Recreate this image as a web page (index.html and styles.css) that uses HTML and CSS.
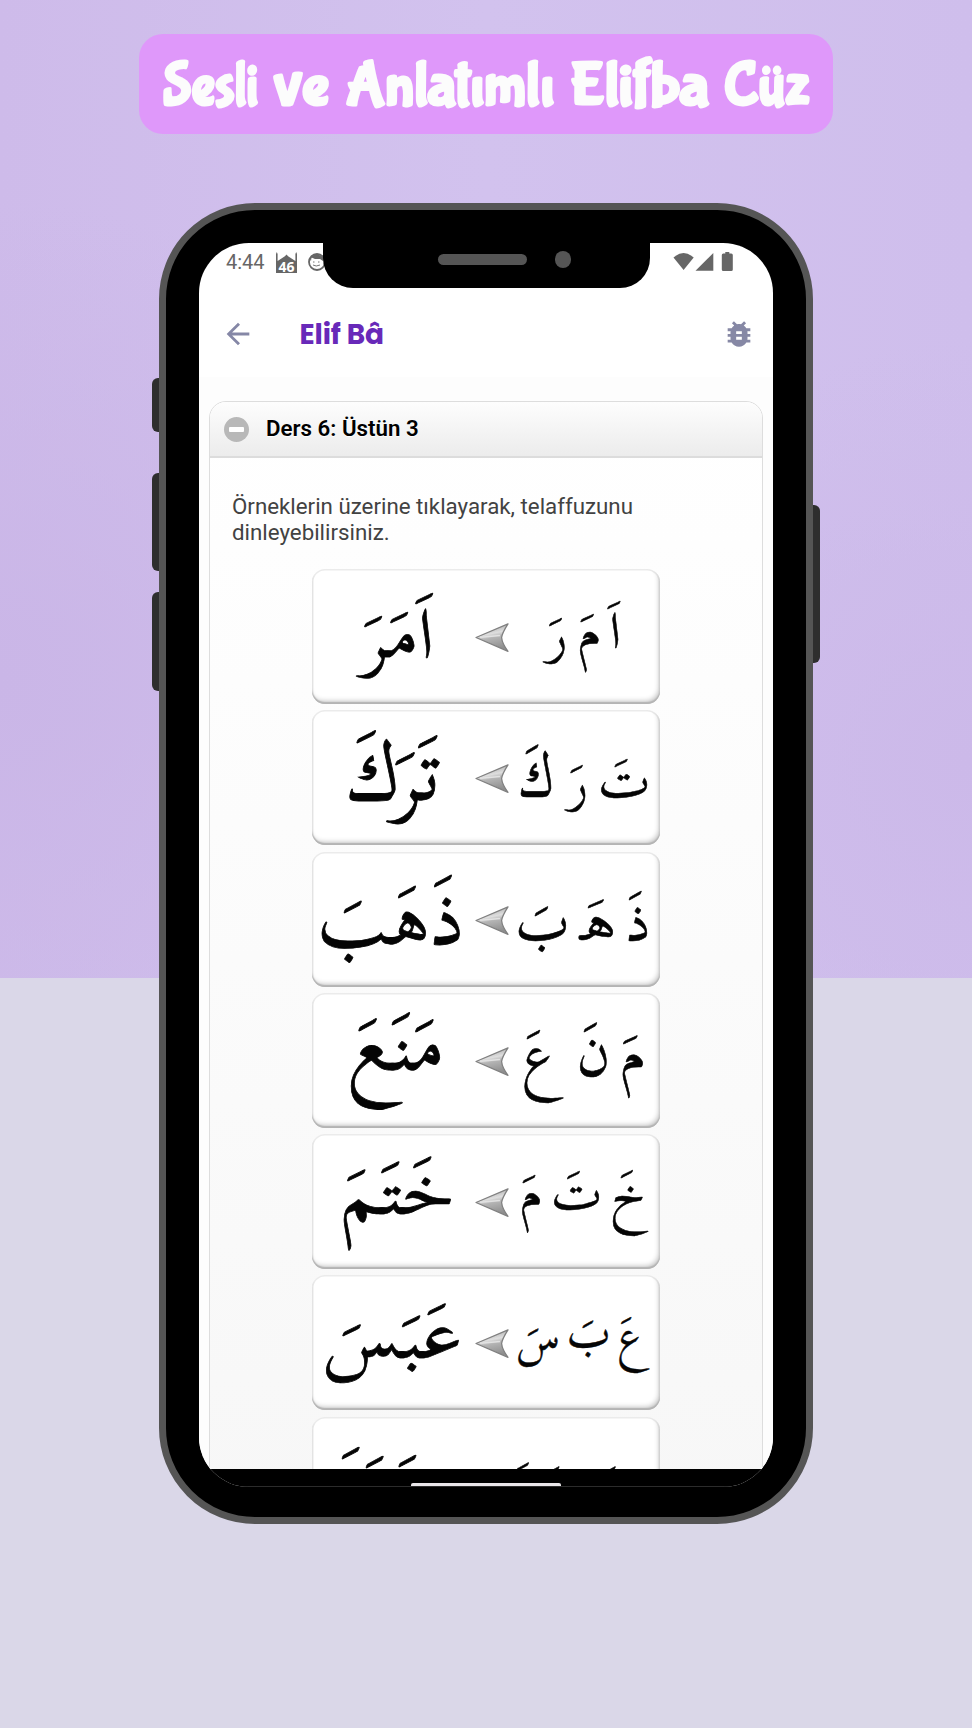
FILE: index.html
```html
<!DOCTYPE html>
<html lang="tr">
<head>
<meta charset="utf-8">
<title>Sesli ve Anlatımlı Elifba Cüz</title>
<link rel="stylesheet" href="styles.css">
</head>
<body>
<svg class="defs" width="0" height="0" aria-hidden="true">
  <defs>
    <linearGradient id="steel" x1="0" y1="0" x2="0.25" y2="1">
      <stop offset="0" stop-color="#8e8e8e"/>
      <stop offset="0.45" stop-color="#dedede"/>
      <stop offset="0.6" stop-color="#b4b4b4"/>
      <stop offset="1" stop-color="#8f8f8f"/>
    </linearGradient>
    <symbol id="arrow" viewBox="0 0 34 29">
      <path d="M1 14.5 33 .8C29 7 27 11 26.600 14.500C27 19 29 23 33 28.300Z" fill="url(#steel)" stroke="#808080" stroke-width="1.300" stroke-linejoin="round"/>
      <path d="M5 14.300 25 12.500" stroke="#e2e2e2" stroke-width="1.500"/>
    </symbol>
  </defs>
</svg>

<header class="banner">
  <svg class="banner-text" width="694" height="100" viewBox="0 0 694 100">
    <text y="69"><tspan x="24" textLength="95" lengthAdjust="spacingAndGlyphs">Sesli</tspan><tspan x="135" textLength="55" lengthAdjust="spacingAndGlyphs">ve</tspan><tspan x="207" textLength="208" lengthAdjust="spacingAndGlyphs">Anlatımlı</tspan><tspan x="431" textLength="139" lengthAdjust="spacingAndGlyphs">Elifba</tspan><tspan x="585" textLength="86" lengthAdjust="spacingAndGlyphs">Cüz</tspan></text>
  </svg>
</header>

<main class="phone">
  <i class="key key-a"></i><i class="key key-b"></i><i class="key key-c"></i><i class="key key-d"></i>
  <div class="screen">
    <div class="notch"><i class="speaker"></i><i class="camera"></i></div>
    <div class="status">
      <span class="time">4:44</span>
      <svg class="mosque" width="21" height="21" viewBox="0 0 21 21"><path fill="#666" d="M0 21V2L.8 0 1.600 2V9L7 5.500Q9 4.500 10.500 2.500 12 4.500 14 5.500L19.400 9V2L20.200 0 21 2V21Z"/><text x="10.500" y="19.500" text-anchor="middle" textLength="16" lengthAdjust="spacingAndGlyphs">46</text></svg>
      <svg class="cat" width="18" height="18" viewBox="0 0 18 18"><circle cx="9" cy="9" r="8" fill="#fff" stroke="#666" stroke-width="1.800"/><path fill="#666" d="M1.500 5Q8-2 16.500 5L15 8 12 6H7L3.500 4.500 3 8Z"/><path d="M5 9h1.500M10 9h1.500M5 12q3 2 7 0" stroke="#777" fill="none"/></svg>
      <svg class="signals" width="62" height="20" viewBox="0 0 62 20"><g fill="#666"><path d="M.5 5.500Q10.500-3.300 20.700 5.500L10.600 18Z"/><path d="M22.500 18.700 40.300 1V18.700Z"/><path d="M52.300 0h4v1.500h2q1.500 0 1.500 1.500v14.500q0 1.500-1.500 1.500h-8q-1.500 0-1.500-1.500V3q0-1.500 1.500-1.500h2Z"/></g></svg>
    </div>
    <div class="appbar">
      <svg class="back" width="34" height="34" viewBox="0 0 24 24"><path fill="#8587a6" d="M20 11H7.830l5.590-5.590L12 4l-8 8 8 8 1.410-1.410L7.830 13H20v-2z"/></svg>
      <h1>Elif Bâ</h1>
      <svg class="bug" width="34" height="34" viewBox="0 0 24 24"><path fill="#8688a5" d="M20 8h-2.810c-.45-.78-1.070-1.450-1.820-1.960L17 4.410 15.590 3l-2.170 2.170C12.960 5.060 12.490 5 12 5s-.96.06-1.410.17L8.410 3 7 4.410l1.620 1.630C7.880 6.550 7.260 7.220 6.810 8H4v2h2.090c-.05.33-.09.66-.09 1v1H4v2h2v1c0 .34.040.67.090 1H4v2h2.810c1.040 1.790 2.970 3 5.190 3s4.150-1.210 5.190-3H20v-2h-2.090c.05-.33.09-.66.09-1v-1h2v-2h-2v-1c0-.34-.04-.67-.09-1H20V8zm-6 8h-4v-2h4v2zm0-4h-4v-2h4v2z"/></svg>
    </div>
    <section class="content">
      <div class="lesson">
        <div class="lesson-head"><i class="minus"></i><h2>Ders 6: Üstün 3</h2></div>
        <p>Örneklerin üzerine tıklayarak, telaffuzunu<br>dinleyebilirsiniz.</p>
        <div class="cards">
          <svg class="card" viewBox="0 0 348 135">
            <text transform="translate(49.5 87.6) scale(1.509 1.400)">اَمَرَ</text>
            <use href="#arrow" x="163" y="54" width="34" height="29"/>
            <text transform="translate(235.1 80.6) scale(1.081 1.031)">رَ</text>
            <text transform="translate(265.6 80.7) scale(1.118 .999)">مَ</text>
            <text transform="translate(297.4 79) scale(1.108 1.010)">اَ</text>
          </svg>
          <svg class="card" viewBox="0 0 348 135">
            <text transform="translate(33.2 90) scale(1.641 1.580)">تَرَكَ</text>
            <use href="#arrow" x="163" y="54" width="34" height="29"/>
            <text transform="translate(206.100 87) scale(1.083 1.187)">كَ</text>
            <text transform="translate(256.4 87.500) scale(1.033 1.022)">رَ</text>
            <text transform="translate(286 87) scale(1.095 1.002)">تَ</text>
          </svg>
          <svg class="card" viewBox="0 0 348 135">
            <text transform="translate(5.8 91.5) scale(1.508 1.520)">ذَهَبَ</text>
            <use href="#arrow" x="163" y="54" width="34" height="29"/>
            <text transform="translate(203.500 86.8) scale(1.126 1.162)">بَ</text>
            <text transform="translate(270 87.500) scale(1.350 1.075)">هَ‍</text>
            <text transform="translate(314 89) scale(1.072 1.103)">ذَ</text>
          </svg>
          <svg class="card" viewBox="0 0 348 135">
            <text transform="translate(36.7 77) scale(1.544 1.550)">مَنَعَ</text>
            <use href="#arrow" x="163" y="54" width="34" height="29"/>
            <text transform="translate(209.5 81) scale(1.131 1.134)">عَ</text>
            <text transform="translate(265 71.500) scale(1.120 1.168)">نَ</text>
            <text transform="translate(308 80.8) scale(1.218 1.077)">مَ</text>
          </svg>
          <svg class="card" viewBox="0 0 348 135">
            <text transform="translate(28.8 80) scale(1.537 1.430)">خَتَمَ</text>
            <use href="#arrow" x="163" y="54" width="34" height="29"/>
            <text transform="translate(207.800 75.700) scale(1.076 .977)">مَ</text>
            <text transform="translate(239 74.8) scale(1.071 .974)">تَ</text>
            <text transform="translate(299.4 75.9) scale(1.029 1.010)">خَ</text>
          </svg>
          <svg class="card" viewBox="0 0 348 135">
            <text transform="translate(12.7 83) scale(1.546 1.446)">عَبَسَ</text>
            <use href="#arrow" x="163" y="54" width="34" height="29"/>
            <text transform="translate(205.600 75.500) scale(.91 .93)">سَ</text>
            <text transform="translate(254.800 71.900) scale(.914 .924)">بَ</text>
            <text transform="translate(305 75.9) scale(.874 .867)">عَ</text>
          </svg>
          <svg class="card" viewBox="0 0 348 135">
            <text transform="translate(25 86) scale(1.5 1.5)">وَرَدَ</text>
            <text transform="translate(201 85) scale(1.050 1.050)">دَ</text>
            <text transform="translate(233 83) scale(1.050 1.050)">رَ</text>
            <text transform="translate(286 83) scale(1.050 1.050)">وَ</text>
          </svg>
        </div>
      </div>
    </section>
    <div class="navbar"><i class="home"></i></div>
  </div>
</main>
</body>
</html>
```
FILE: styles.css
```css
* { box-sizing: border-box; }

body {
  margin: 0;
  height: 1728px;
  overflow: hidden;
  display: flex;
  flex-direction: column;
  align-items: center;
  padding-top: 34px;
  background:
    radial-gradient(circle 480px at 0 680px, #cab6e7, rgba(202, 182, 231, 0)) 0 0 / 100% 978px no-repeat,
    radial-gradient(circle 420px at 972px 760px, #ccb9e9, rgba(204, 185, 233, 0)) 0 0 / 100% 978px no-repeat,
    linear-gradient(90deg, #cebbea, #d2c2ee 50%, #cfbeec) 0 0 / 100% 978px no-repeat,
    #dad7e8;
  font-family: Roboto, "Liberation Sans", sans-serif;
}

h1, h2, p { margin: 0; }
svg { display: block; flex: none; }
.defs { position: absolute; }

.banner {
  width: 694px;
  height: 100px;
  border-radius: 24px;
  background: #df98fa;
}
.banner-text text {
  font: 62px "Bubblegum Sans", Boogaloo, "Caveat Brush", sans-serif;
  fill: #fcfcfc;
  stroke: #fcfcfc;
  stroke-width: 3px;
  stroke-linejoin: round;
}

.phone {
  position: relative;
  width: 654px;
  height: 1321px;
  margin-top: 69px;
  padding: 33px;
  border: 7px solid #555;
  border-radius: 96px;
  background: #000;
}
.key {
  position: absolute;
  left: -14px;
  width: 7px;
  border-radius: 6px 0 0 6px;
  background: #2e2e2e;
}
.key-a { top: 168px; height: 54px; }
.key-b { top: 263px; height: 98px; }
.key-c { top: 382px; height: 99px; }
.key-d { top: 295px; height: 158px; left: auto; right: -14px; border-radius: 0 6px 6px 0; }

.screen {
  position: relative;
  width: 574px;
  height: 1243.500px;
  display: flex;
  flex-direction: column;
  overflow: hidden;
  border-radius: 50px;
  background: #fff;
}
.notch {
  position: absolute;
  z-index: 2;
  top: 0;
  left: 124px;
  width: 327px;
  height: 44.500px;
  border-radius: 0 0 30px 30px;
  background: #000;
  display: flex;
  gap: 27.500px;
  padding: 8px 0 0 115px;
}
.speaker { width: 89px; height: 11.500px; margin-top: 2.500px; border-radius: 6px; background: #555; }
.camera { width: 16.500px; height: 16.500px; border-radius: 50%; background: #555; }

.status { display: flex; height: 48px; padding: 9px 38px 0 27px; color: #666; }
.time { width: 50px; font-size: 20px; line-height: 21px; }
.mosque text { font: bold 15px "Open Sans", sans-serif; fill: #fff; }
.cat { margin: 1px 0 0 11px; }
.signals { margin-left: auto; }

.appbar { display: flex; align-items: center; height: 86px; padding: 0 17px 0 22px; }
.appbar h1 {
  flex: 1;
  margin: 2px 0 0 44.500px;
  font: 700 28px/40px Poppins, Inter, sans-serif;
  letter-spacing: -.1px;
  color: #6829b9;
}

.content { flex: 1; min-height: 0; overflow: hidden; padding: 24px 10px 0; background: #fdfdfd; }
.lesson {
  height: 1400px;
  border: 1px solid #ddd;
  border-radius: 17px 17px 0 0;
  background: linear-gradient(#fff, #f5f5f5);
  overflow: hidden;
}
.lesson-head {
  display: flex;
  align-items: center;
  gap: 17px;
  height: 56px;
  padding-left: 14px;
  border-bottom: 2px solid #dcdcdc;
  background: linear-gradient(#fdfdfd, #ececec);
}
.lesson-head h2 { margin-bottom: 2px; font-size: 22.300px; font-weight: 600; color: #000; text-shadow: 0 1px 0 #fff; }
.minus {
  display: flex;
  width: 25px;
  height: 25px;
  border-radius: 50%;
  background: #b8b8b8;
}
.minus::before { content: ""; width: 15px; height: 5px; margin: auto; border-radius: 1px; background: #fff; }
.lesson p { height: 111px; padding: 35px 22px 0; font-size: 22.300px; line-height: 26px; color: #424242; }

.cards { display: flex; flex-direction: column; align-items: center; gap: 6.300px; }
.card {
  width: 348px;
  height: 135px;
  overflow: visible;
  border-radius: 13px;
  background: #fff;
  box-shadow: inset 0 -2px 1px #b4b4b4, inset -2px -4px 5px -1px #c4c4c4, inset 0 0 0 1.500px #ebebeb;
}
.card text {
  font: 50px "Scheherazade New", "Noto Naskh Arabic", "DejaVu Sans", sans-serif;
  fill: #050505;
  stroke: #050505;
  stroke-width: .5px;
}

.navbar { height: 17.500px; background: #000; border-bottom: 1px solid #2c2c2c; display: flex; align-items: flex-end; justify-content: center; }
.home { width: 150px; height: 3.500px; margin-bottom: -.5px; border-radius: 2px 2px 0 0; background: #e9e6e9; }
```
